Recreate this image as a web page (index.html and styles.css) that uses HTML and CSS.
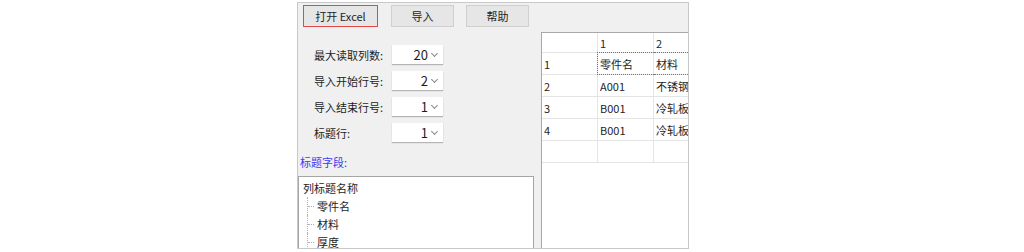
FILE: index.html
```html
<!doctype html>
<html lang="zh-CN">
<head>
  <meta charset="UTF-8" />
  <title>Excel 导入</title>
  <link rel="stylesheet" href="styles.css">
</head>
<body>
  <div class="window">
    <div class="left-pane">
      <div class="toolbar">
        <button class="tool-btn open-btn">打开 Excel</button>
        <button class="tool-btn">导入</button>
        <button class="tool-btn">帮助</button>
      </div>

      <div class="options">
        <div class="option-row">
          <span class="option-label">最大读取列数:</span>
          <div class="combo"><span>20</span><span class="chevron"></span></div>
        </div>
        <div class="option-row">
          <span class="option-label">导入开始行号:</span>
          <div class="combo"><span>2</span><span class="chevron"></span></div>
        </div>
        <div class="option-row">
          <span class="option-label">导入结束行号:</span>
          <div class="combo"><span>1</span><span class="chevron"></span></div>
        </div>
        <div class="option-row">
          <span class="option-label">标题行:</span>
          <div class="combo"><span>1</span><span class="chevron"></span></div>
        </div>
      </div>

      <div class="section-title">标题字段:</div>

      <div class="listbox">
        <div class="tree-root">列标题名称</div>
        <ul class="tree-children">
          <li>零件名</li>
          <li>材料</li>
          <li>厚度</li>
        </ul>
      </div>
    </div>

    <div class="right-pane">
      <div class="sheet-top"></div>
      <div class="sheet-wrap">
        <table class="sheet">
          <thead>
            <tr>
              <th class="corner"></th>
              <th>1</th>
              <th>2</th>
            </tr>
          </thead>
          <tbody>
            <tr class="focused">
              <td class="row-head">1</td>
              <td class="focus-first">零件名</td>
              <td class="focus-last">材料</td>
            </tr>
            <tr>
              <td class="row-head">2</td>
              <td>A001</td>
              <td>不锈钢</td>
            </tr>
            <tr>
              <td class="row-head">3</td>
              <td>B001</td>
              <td>冷轧板</td>
            </tr>
            <tr>
              <td class="row-head">4</td>
              <td>B001</td>
              <td>冷轧板</td>
            </tr>
            <tr>
              <td class="row-head"></td>
              <td></td>
              <td></td>
            </tr>
          </tbody>
        </table>
      </div>
    </div>
  </div>
</body>
</html>
```

FILE: styles.css
```css
body {
  margin: 0;
  padding: 2px 0 0 297px;
  background-color: #fff;
  color: #1e1e1e;
  font-family: "Microsoft YaHei", "Noto Sans CJK SC", "Noto Sans", sans-serif;
  font-size: 11px;
}

.window {
  display: flex;
  width: 390px;
  height: 245px;
  border: 1px solid #c8c8c8;
  background-color: #f0f0f0;
  overflow: hidden;
}

.left-pane {
  width: 243px;
  flex-shrink: 0;
  display: flex;
  flex-direction: column;
}

.toolbar {
  display: flex;
  gap: 12px;
  padding: 2px 0 0 5px;
}

.tool-btn {
  height: 22px;
  width: 63px;
  padding: 0;
  font-family: inherit;
  font-size: 11px;
  color: #1e1e1e;
  background-color: #e6e6e6;
  border: 1px solid #cfcfcf;
  border-radius: 0;
}

.open-btn {
  width: 75px;
  border-color: #e2474a;
  margin-right: 1px;
}

/* option rows */
.options {
  display: flex;
  flex-direction: column;
  gap: 7px;
  margin-top: 18px;
}

.option-row {
  display: flex;
  align-items: center;
  height: 19px;
}

.option-label {
  width: 78px;
  padding-left: 16px;
}

.combo {
  width: 51px;
  height: 19px;
  display: flex;
  align-items: center;
  justify-content: flex-end;
  gap: 3px;
  padding-right: 4px;
  box-sizing: border-box;
  background-color: #fff;
  box-shadow: 0 1px 1px rgba(0, 0, 0, 0.25);
  font-size: 13px;
}

.chevron {
  width: 4px;
  height: 4px;
  border-right: 1px solid #888;
  border-bottom: 1px solid #888;
  transform: rotate(45deg);
  margin: 0 2px 3px 1px;
}

.section-title {
  margin: 12px 0 0 2px;
  height: 16px;
  line-height: 16px;
  color: #3c3cf0;
}

/* title field tree */
.listbox {
  margin: 6px 7px 0 0;
  height: 120px;
  border: 1px solid #a5a5a5;
  background-color: #fff;
  padding: 2px 0 0 4px;
}

.tree-root {
  height: 18px;
  line-height: 18px;
}

.tree-children {
  list-style: none;
  margin: 0;
  padding: 0 0 0 4px;
}

.tree-children li {
  height: 18px;
  line-height: 18px;
  padding-left: 9px;
  border-left: 1px dotted #b0b0b0;
  position: relative;
}

.tree-children li::before {
  content: "";
  position: absolute;
  left: 0;
  top: 9px;
  width: 6px;
  border-top: 1px dotted #b0b0b0;
}

/* sheet */
.right-pane {
  flex: 1;
  display: flex;
  flex-direction: column;
}

.sheet-top {
  height: 29px;
  flex-shrink: 0;
}

.sheet-wrap {
  flex: 1;
  background-color: #fff;
  border-left: 1px solid #a8a8a8;
  border-top: 1px solid #a8a8a8;
  overflow: hidden;
}

.sheet {
  border-collapse: collapse;
  table-layout: fixed;
  width: 170px;
}

.sheet th,
.sheet td {
  height: 20px;
  padding: 0 0 0 2px;
  text-align: left;
  font-weight: normal;
  border-right: 1px solid #e4e4e4;
  border-bottom: 1px solid #e4e4e4;
  white-space: nowrap;
}

.sheet th {
  height: 19px;
}

.sheet .corner,
.sheet .row-head {
  width: 53px;
}

.sheet th:nth-child(2),
.sheet td:nth-child(2) {
  width: 53px;
}

.sheet td {
  height: 21px;
}

/* dotted focus frame over the first data row */
.focused td {
  position: relative;
}

.focused .focus-first::after,
.focused .focus-last::after {
  content: "";
  position: absolute;
  top: -1px;
  bottom: -1px;
  left: 0;
  right: -1px;
  border-top: 1px dotted #777;
  border-bottom: 1px dotted #777;
  pointer-events: none;
}

.focused .focus-first::after {
  left: -1px;
  border-left: 1px dotted #777;
}
```
